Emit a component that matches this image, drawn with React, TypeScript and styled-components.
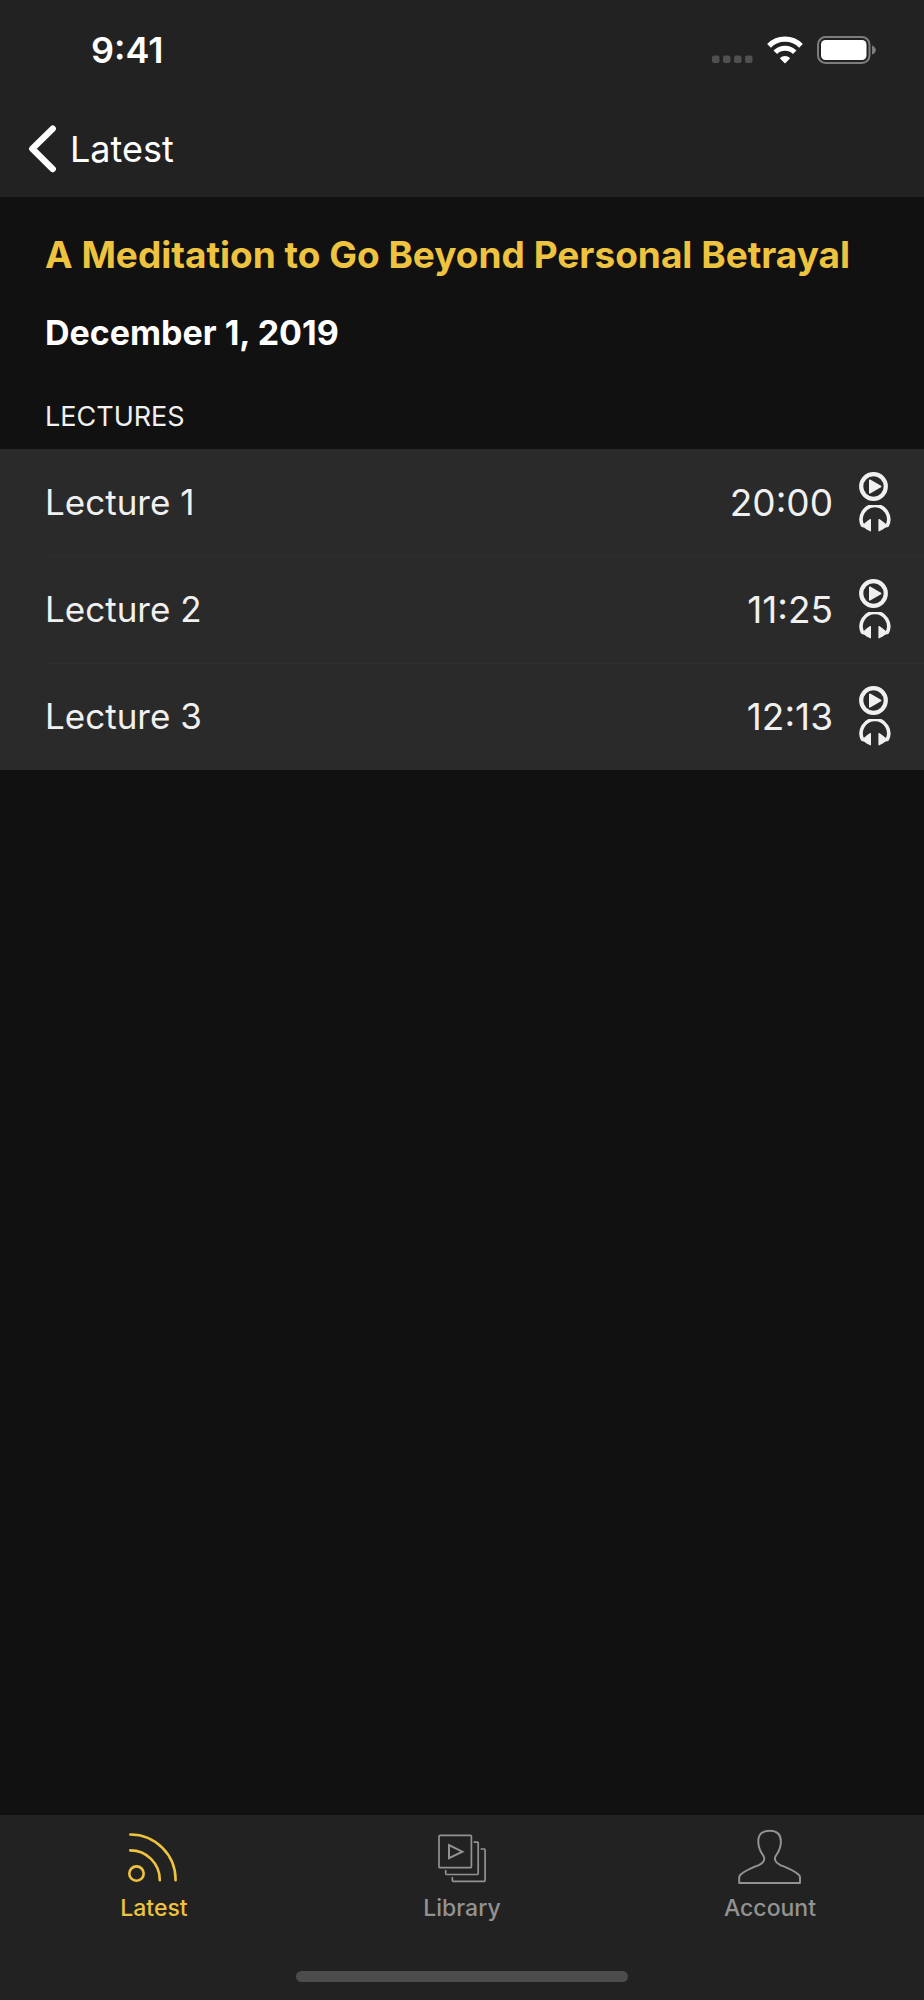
import React from "react";
import styled, { createGlobalStyle } from "styled-components";

const color = {
  bar: "#222222",
  page: "#111111",
  row: "#2a2a2a",
  line: "#2e2e2e",
  accent: "#eec33f",
  text: "#f0f0f0",
  muted: "#929292",
};

const GlobalStyle = createGlobalStyle`
  *, *::before, *::after { box-sizing: border-box; }
  body {
    margin: 0;
    background: ${color.page};
    font-family: Inter, "Liberation Sans", sans-serif;
  }
  h1, h2, p, ul { margin: 0; padding: 0; }
  svg { display: block; flex: none; }
`;

const Screen = styled.div`
  display: flex;
  flex-direction: column;
  min-height: 100vh;
  color: #ffffff;
`;

const TopBar = styled.header`
  background: ${color.bar};
`;

const StatusBar = styled.div`
  display: flex;
  align-items: center;
  justify-content: space-between;
  height: 100px;
  padding: 0 48px 0 91px;
`;

const Clock = styled.span`
  font-size: 36px;
  line-height: 40px;
  font-weight: 600;
`;

const StatusIcons = styled.div`
  display: flex;
  align-items: center;
  gap: 14px;
`;

const Nav = styled.nav`
  display: flex;
  align-items: center;
  height: 97px;
  padding: 0 28px;
`;

const BackButton = styled.button`
  display: flex;
  align-items: center;
  gap: 14px;
  padding: 0;
  border: 0;
  background: none;
  color: #ffffff;
  font-family: inherit;
  font-size: 36px;
  line-height: 48px;
  cursor: pointer;
`;

const Content = styled.main`
  flex: 1;
`;

const Intro = styled.section`
  padding: 34px 45px 12px;
`;

const Title = styled.h1`
  color: ${color.accent};
  font-size: 37px;
  line-height: 48px;
  font-weight: 700;
`;

const PublishedOn = styled.p`
  margin-top: 34px;
  font-size: 34px;
  line-height: 40px;
  font-weight: 700;
`;

const SectionLabel = styled.h2`
  margin-top: 44px;
  color: ${color.text};
  font-size: 27px;
  line-height: 40px;
  font-weight: 400;
`;

const LectureList = styled.ul`
  list-style: none;
  background: ${color.row};
  padding-left: 45px;
`;

const LectureRow = styled.li`
  display: flex;
  align-items: center;
  height: 107px;
  padding: 0 33px 2px 0;
  color: ${color.text};

  & + & {
    border-top: 1px solid ${color.line};
  }
`;

const LectureName = styled.span`
  flex: 1;
  font-size: 35px;
  line-height: 48px;
`;

const Duration = styled.span`
  padding-top: 2px;
  font-size: 37px;
  line-height: 48px;
`;

const Actions = styled.div`
  display: flex;
  flex-direction: column;
  gap: 4px;
  margin-left: 26px;
`;

const IconButton = styled.button`
  display: block;
  padding: 0;
  border: 0;
  background: none;
  color: inherit;
  cursor: pointer;
`;

const TabBar = styled.nav`
  background: ${color.bar};
  padding-bottom: 18px;
`;

const Tabs = styled.div`
  display: flex;
`;

const Tab = styled.button<{ $active?: boolean }>`
  flex: 1;
  display: flex;
  flex-direction: column;
  align-items: center;
  gap: 5px;
  padding: 12px 0 47px;
  border: 0;
  background: none;
  color: ${(p) => (p.$active ? color.accent : color.muted)};
  font-family: inherit;
  font-size: 23px;
  line-height: 32px;
  font-weight: 500;
  cursor: pointer;
`;

const HomeIndicator = styled.div`
  width: 36%;
  height: 11px;
  margin: 0 auto;
  border-radius: 6px;
  background: #4c4c4c;
`;

const SignalDots = () => (
  <svg width="41" height="28" viewBox="0 0 41 28" fill="#505050" aria-hidden="true">
    {[0, 11, 22, 33].map((x) => (
      <rect key={x} x={x} y="19.5" width="7.5" height="7.5" rx="2" />
    ))}
  </svg>
);

const WifiIcon = () => (
  <svg width="36" height="28" viewBox="0 0 36 28" fill="none" stroke="#ffffff" aria-hidden="true">
    <path d="M2 9.8 A22.6 22.6 0 0 1 34 9.8" strokeWidth="5.2" />
    <path d="M8.3 16.2 A13.6 13.6 0 0 1 27.7 16.2" strokeWidth="5" />
    <path d="M18 27.5 L12.8 22.2 A7.4 7.4 0 0 1 23.2 22.2 Z" fill="#ffffff" stroke="none" />
  </svg>
);

const BatteryIcon = () => (
  <svg width="59" height="28" viewBox="0 0 59 28" aria-hidden="true">
    <rect x="1" y="1" width="51.5" height="26" rx="7.5" fill="none" stroke="#7d7d7d" strokeWidth="2" />
    <rect x="4" y="4" width="45.5" height="20" rx="4.5" fill="#ffffff" />
    <path d="M55 9.5 Q58.8 11 58.8 14 Q58.8 17 55 18.5 Z" fill="#7d7d7d" />
  </svg>
);

const BackChevron = () => (
  <svg width="28" height="48" viewBox="0 0 28 48" fill="none" aria-hidden="true">
    <path
      d="M24.7 3.7 L4.3 23.7 L24.7 44"
      stroke="currentColor"
      strokeWidth="6.4"
      strokeLinecap="round"
      strokeLinejoin="round"
    />
  </svg>
);

const PlayIcon = () => (
  <svg width="29" height="29" viewBox="0 0 29 29" aria-hidden="true">
    <circle cx="14.5" cy="14.5" r="12.3" fill="none" stroke="currentColor" strokeWidth="4.2" />
    <path
      d="M10.8 8.2 L21.6 14.5 L10.8 20.8 Z"
      fill="currentColor"
      stroke="currentColor"
      strokeWidth="1.6"
      strokeLinejoin="round"
    />
  </svg>
);

const HeadphonesIcon = () => (
  <svg width="32" height="27" viewBox="0 0 32 27" aria-hidden="true">
    <path
      d="M3.6 20.6 A13.8 13.8 0 1 1 28.2 20.6"
      fill="none"
      stroke="currentColor"
      strokeWidth="3.6"
    />
    <path
      d="M11.4 14.6 V25.8 L8 24 Q6 21.6 2.8 21.4 L8.6 16.4 Z M20 14.6 V25.8 L23.4 24 Q25.4 21.6 29 21.4 L22.8 16.4 Z"
      fill="currentColor"
      stroke="currentColor"
      strokeWidth="1.2"
      strokeLinejoin="round"
    />
  </svg>
);

const FeedIcon = () => (
  <svg width="64" height="60" viewBox="0 0 64 60" fill="none" stroke="currentColor" aria-hidden="true">
    <g strokeWidth="2.6" strokeLinecap="round">
      <circle cx="14.5" cy="46.6" r="7.2" />
      <path d="M8.3 23.4 A29.5 29.5 0 0 1 37.8 53.2" />
      <path d="M8.3 7.5 A45.3 45.3 0 0 1 53.6 53.2" />
    </g>
  </svg>
);

const LibraryIcon = () => (
  <svg width="64" height="60" viewBox="0 0 64 60" fill="none" stroke="currentColor" aria-hidden="true">
    <g strokeWidth="1.7" strokeLinejoin="round">
      <rect x="9" y="8.4" width="32.4" height="32.3" rx="1" />
      <path d="M43.6 15.2 H47.3 Q48.2 15.2 48.2 16.1 V46.6 Q48.2 47.5 47.3 47.5 H16.6 Q15.7 47.5 15.7 46.6 V43" />
      <path d="M50.6 22 H54.2 Q55.1 22 55.1 22.9 V53.4 Q55.1 54.3 54.2 54.3 H23.3 Q22.4 54.3 22.4 53.4 V50" />
      <path d="M19 18.2 V31.2 L32.4 24.7 Z" strokeLinejoin="miter" strokeWidth="2" />
    </g>
  </svg>
);

const AccountIcon = () => (
  <svg width="64" height="60" viewBox="0 0 64 60" fill="none" stroke="currentColor" aria-hidden="true">
    <path
      d="M1.2 56 V50.5 Q1.2 48.6 3 47.2 C9.5 42 16.5 40 21.3 37.8 C26.5 35.3 27 31.8 25.4 28.8 C22.8 24.8 20.3 22.3 20.3 14.5 C20.3 7 24.5 3.8 31.6 3.8 C38.7 3.8 42.9 7 42.9 14.5 C42.9 22.3 40.4 24.8 37.8 28.8 C36.2 31.8 36.7 35.3 41.9 37.8 C46.7 40 53.7 42 60.2 47.2 Q62 48.6 62 50.5 V56 Z"
      strokeWidth="2"
      strokeLinejoin="round"
    />
  </svg>
);

const lectures = [
  { name: "Lecture 1", duration: "20:00" },
  { name: "Lecture 2", duration: "11:25" },
  { name: "Lecture 3", duration: "12:13" },
];

export default function App() {
  return (
    <Screen>
      <GlobalStyle />
      <TopBar>
        <StatusBar>
          <Clock>9:41</Clock>
          <StatusIcons>
            <SignalDots />
            <WifiIcon />
            <BatteryIcon />
          </StatusIcons>
        </StatusBar>
        <Nav>
          <BackButton type="button">
            <BackChevron />
            Latest
          </BackButton>
        </Nav>
      </TopBar>

      <Content>
        <Intro>
          <Title>A Meditation to Go Beyond Personal Betrayal</Title>
          <PublishedOn>December 1, 2019</PublishedOn>
          <SectionLabel>LECTURES</SectionLabel>
        </Intro>
        <LectureList>
          {lectures.map((lecture) => (
            <LectureRow key={lecture.name}>
              <LectureName>{lecture.name}</LectureName>
              <Duration>{lecture.duration}</Duration>
              <Actions>
                <IconButton type="button" aria-label={`Play ${lecture.name}`}>
                  <PlayIcon />
                </IconButton>
                <IconButton type="button" aria-label={`Listen to ${lecture.name}`}>
                  <HeadphonesIcon />
                </IconButton>
              </Actions>
            </LectureRow>
          ))}
        </LectureList>
      </Content>

      <TabBar>
        <Tabs>
          <Tab type="button" $active aria-current="page">
            <FeedIcon />
            Latest
          </Tab>
          <Tab type="button">
            <LibraryIcon />
            Library
          </Tab>
          <Tab type="button">
            <AccountIcon />
            Account
          </Tab>
        </Tabs>
        <HomeIndicator />
      </TabBar>
    </Screen>
  );
}
